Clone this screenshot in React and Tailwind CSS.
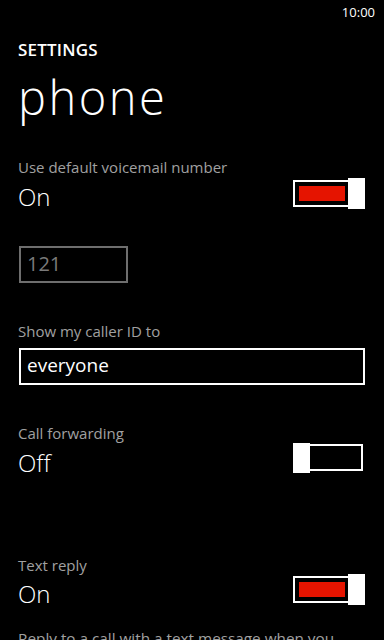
import React from "react";

function Toggle({ on, className = "" }) {
  if (on) {
    return (
      <div className={"relative w-[72px] h-[31px] shrink-0 " + className}>
        <div className="absolute left-0 top-[2px] w-[58px] h-[27px] border-2 border-white p-[4px]">
          <div className="w-full h-full bg-[#e51400]" />
        </div>
        <div className="absolute right-0 top-0 w-[17px] h-[31px] bg-white" />
      </div>
    );
  }
  return (
    <div className={"relative w-[72px] h-[31px] shrink-0 " + className}>
      <div className="absolute left-[14px] top-[1px] w-[56px] h-[27px] border-2 border-white" />
      <div className="absolute left-0 top-0 w-[17px] h-[30px] bg-white" />
    </div>
  );
}

export default function App() {
  return (
    <div
      className="w-[384px] h-[640px] bg-black text-white overflow-hidden"
      style={{ fontFamily: '"Open Sans", "Noto Sans", sans-serif' }}
    >
      <div className="flex justify-end pr-[9px] pt-[3px] h-[20px]">
        <span className="text-[13px] leading-[18px]">10:00</span>
      </div>
      <div className="pl-[18px] pr-[19px]">
        <div className="mt-[20px] text-[17px] leading-[20px] font-semibold tracking-[0.2px]">SETTINGS</div>
        <div className="mt-[15px] text-[47px] leading-[44px] font-light tracking-[2.5px]">phone</div>

        <div className="mt-[38px] flex justify-between items-start">
          <div>
            <div className="text-[15px] leading-[20px] text-[#a0a0a0]">Use default voicemail number</div>
            <div className="mt-[6px] text-[24px] leading-[28px] font-light">On</div>
          </div>
          <Toggle on className="mt-[21px]" />
        </div>

        <div className="mt-[35px] ml-[1px] w-[109px] h-[37px] border-2 border-[#6e6e6e] pl-[6px] text-[20px] leading-[31px] text-[#7a7a7a]">
          121
        </div>

        <div className="mt-[38px] text-[15px] leading-[20px] text-[#a0a0a0]">Show my caller ID to</div>
        <div className="mt-[7px] ml-[1px] h-[37px] border-2 border-white pl-[6px] text-[19px] leading-[31px]">
          everyone
        </div>

        <div className="mt-[38px] flex justify-between items-start">
          <div>
            <div className="text-[15px] leading-[20px] text-[#a0a0a0]">Call forwarding</div>
            <div className="mt-[6px] text-[24px] leading-[28px] font-light">Off</div>
          </div>
          <Toggle on={false} className="mt-[20px]" />
        </div>

        <div className="mt-[78px] flex justify-between items-start">
          <div>
            <div className="text-[15px] leading-[20px] text-[#a0a0a0]">Text reply</div>
            <div className="mt-[5px] text-[24px] leading-[28px] font-light">On</div>
          </div>
          <Toggle on className="mt-[19px]" />
        </div>

        <div className="mt-[20px] text-[15.3px] leading-[20px] text-[#a0a0a0] whitespace-nowrap">
          Reply to a call with a text message when you
        </div>
      </div>
    </div>
  );
}
